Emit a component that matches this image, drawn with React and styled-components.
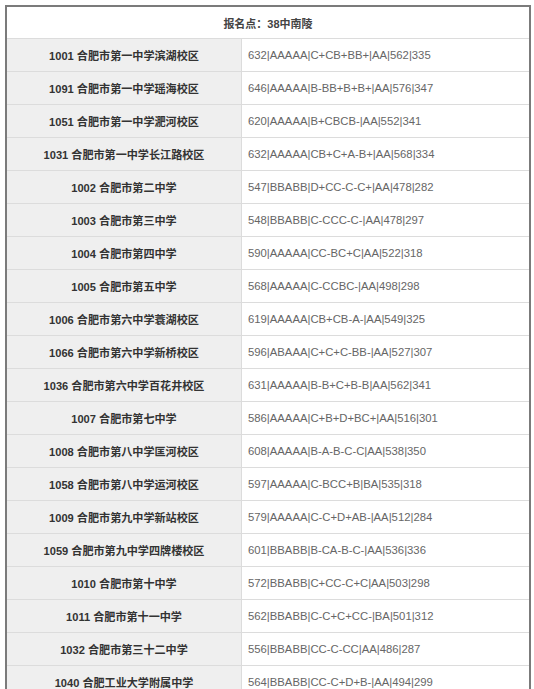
import React from "react";
import styled, { createGlobalStyle } from "styled-components";

const Global = createGlobalStyle`
  html, body { margin: 0; padding: 0; background: #fff; }
  body { font-family: "Liberation Sans", Arial, "Noto Sans CJK SC", sans-serif; }
`;

const Frame = styled.div`
  margin: 5px 0 0 5px;
  width: 522px;
  border: 2px solid #7b7b7b;
  background: #fff;
`;

const Header = styled.div`
  height: 31px;
  display: flex;
  align-items: center;
  justify-content: center;
  font-size: 11px;
  font-weight: bold;
  color: #444;
  border-bottom: 1px solid #dcdcdc;
`;

const Row = styled.div`
  display: grid;
  grid-template-columns: 235px 1fr;
  height: 33px;
  border-bottom: 1px solid #dcdcdc;
  box-sizing: border-box;
`;

const Name = styled.div`
  background: #efefef;
  border-right: 1px solid #dcdcdc;
  display: flex;
  align-items: center;
  justify-content: center;
  font-size: 11.1px;
  font-weight: bold;
  color: #333;
  white-space: nowrap;
`;

const Score = styled.div`
  display: flex;
  align-items: center;
  padding-left: 6px;
  font-size: 11.3px;
  color: #666;
  white-space: nowrap;
`;

const rows = [
  ["1001 合肥市第一中学滨湖校区", "632|AAAAA|C+CB+BB+|AA|562|335"],
  ["1091 合肥市第一中学瑶海校区", "646|AAAAA|B-BB+B+B+|AA|576|347"],
  ["1051 合肥市第一中学淝河校区", "620|AAAAA|B+CBCB-|AA|552|341"],
  ["1031 合肥市第一中学长江路校区", "632|AAAAA|CB+C+A-B+|AA|568|334"],
  ["1002 合肥市第二中学", "547|BBABB|D+CC-C-C+|AA|478|282"],
  ["1003 合肥市第三中学", "548|BBABB|C-CCC-C-|AA|478|297"],
  ["1004 合肥市第四中学", "590|AAAAA|CC-BC+C|AA|522|318"],
  ["1005 合肥市第五中学", "568|AAAAA|C-CCBC-|AA|498|298"],
  ["1006 合肥市第六中学蓑湖校区", "619|AAAAA|CB+CB-A-|AA|549|325"],
  ["1066 合肥市第六中学新桥校区", "596|ABAAA|C+C+C-BB-|AA|527|307"],
  ["1036 合肥市第六中学百花井校区", "631|AAAAA|B-B+C+B-B|AA|562|341"],
  ["1007 合肥市第七中学", "586|AAAAA|C+B+D+BC+|AA|516|301"],
  ["1008 合肥市第八中学匡河校区", "608|AAAAA|B-A-B-C-C|AA|538|350"],
  ["1058 合肥市第八中学运河校区", "597|AAAAA|C-BCC+B|BA|535|318"],
  ["1009 合肥市第九中学新站校区", "579|AAAAA|C-C+D+AB-|AA|512|284"],
  ["1059 合肥市第九中学四牌楼校区", "601|BBABB|B-CA-B-C-|AA|536|336"],
  ["1010 合肥市第十中学", "572|BBABB|C+CC-C+C|AA|503|298"],
  ["1011 合肥市第十一中学", "562|BBABB|C-C+C+CC-|BA|501|312"],
  ["1032 合肥市第三十二中学", "556|BBABB|CC-C-CC|AA|486|287"],
  ["1040 合肥工业大学附属中学", "564|BBABB|CC-C+D+B-|AA|494|299"],
];

export default function App() {
  return (
    <>
      <Global />
      <Frame>
        <Header>报名点：38中南陵</Header>
        {rows.map(([n, s]) => (
          <Row key={n}>
            <Name>{n}</Name>
            <Score>{s}</Score>
          </Row>
        ))}
      </Frame>
    </>
  );
}
